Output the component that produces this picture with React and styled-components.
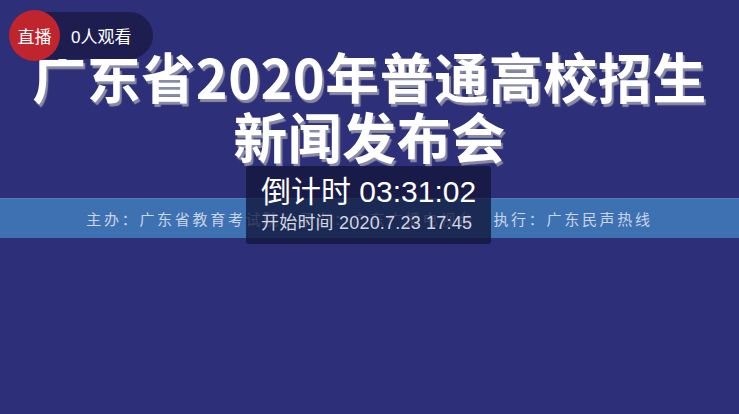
import React from 'react';
import styled, { createGlobalStyle } from 'styled-components';

const GlobalStyle = createGlobalStyle`
  html, body {
    margin: 0;
    padding: 0;
    background: #2d2f79;
  }
  * {
    box-sizing: border-box;
  }
`;

const Player = styled.div`
  position: relative;
  width: 739px;
  height: 414px;
  overflow: hidden;
  background: #2d2f79;
  font-family: "Liberation Sans", "Noto Sans CJK SC", sans-serif;
`;

const Poster = styled.div`
  display: flex;
  flex-direction: column;
  align-items: center;
  padding-top: 46px;
`;

const Title = styled.h1`
  margin: 0;
  font-family: "Noto Sans CJK SC", sans-serif;
  font-weight: 700;
  font-size: 54px;
  line-height: 60px;
  color: #ffffff;
  text-align: center;
  letter-spacing: 0.5px;
  text-shadow: 2px 3px 1px #8a8ba6;
`;

const Band = styled.div`
  margin-top: 32px;
  width: 100%;
  height: 40px;
  display: flex;
  align-items: center;
  justify-content: center;
  background: #3e71b2;
  border-top: 1px solid #4d7fbe;
`;

const BandText = styled.span`
  font-family: "Noto Sans CJK SC", sans-serif;
  font-size: 15px;
  letter-spacing: 2.7px;
  color: #c9d5ea;
  white-space: pre;
`;

const LiveBadge = styled.div`
  position: absolute;
  top: 10px;
  left: 9px;
  display: flex;
  align-items: center;
  height: 50px;
`;

const LiveDot = styled.div`
  position: relative;
  z-index: 1;
  width: 51px;
  height: 51px;
  border-radius: 50%;
  background: #c0242c;
  display: flex;
  align-items: center;
  justify-content: center;
  color: #fff;
  font-family: "Noto Sans CJK SC", sans-serif;
  font-size: 17px;
`;

const Viewers = styled.div`
  height: 47px;
  margin-left: -50px;
  padding: 0 22px 0 61px;
  display: flex;
  align-items: center;
  border-radius: 24px;
  background: #1d1e4f;
  color: #fff;
  font-family: "Liberation Sans", "Noto Sans CJK SC", sans-serif;
  font-size: 17px;
`;

const Countdown = styled.div`
  position: absolute;
  top: 166px;
  left: 246px;
  width: 245px;
  height: 78px;
  padding: 8px 0 0 15px;
  border-radius: 3px;
  background: rgba(18, 22, 58, 0.78);
  display: flex;
  flex-direction: column;
`;

const Timer = styled.div`
  font-size: 30px;
  line-height: 35px;
  color: #ffffff;
`;

const StartTime = styled.div`
  margin-top: 3px;
  font-size: 18px;
  line-height: 22px;
  letter-spacing: 0.2px;
  color: #d3d5e0;
`;

export default function App() {
  return (
    <>
      <GlobalStyle />
      <Player>
        <Poster>
          <Title>
            广东省2020年普通高校招生
            <br />
            新闻发布会
          </Title>
          <Band>
            <BandText>主办：广东省教育考试院　承办：广东广播电视台　执行：广东民声热线</BandText>
          </Band>
        </Poster>
        <LiveBadge>
          <LiveDot>直播</LiveDot>
          <Viewers>0人观看</Viewers>
        </LiveBadge>
        <Countdown>
          <Timer>倒计时 03:31:02</Timer>
          <StartTime>开始时间 2020.7.23 17:45</StartTime>
        </Countdown>
      </Player>
    </>
  );
}
